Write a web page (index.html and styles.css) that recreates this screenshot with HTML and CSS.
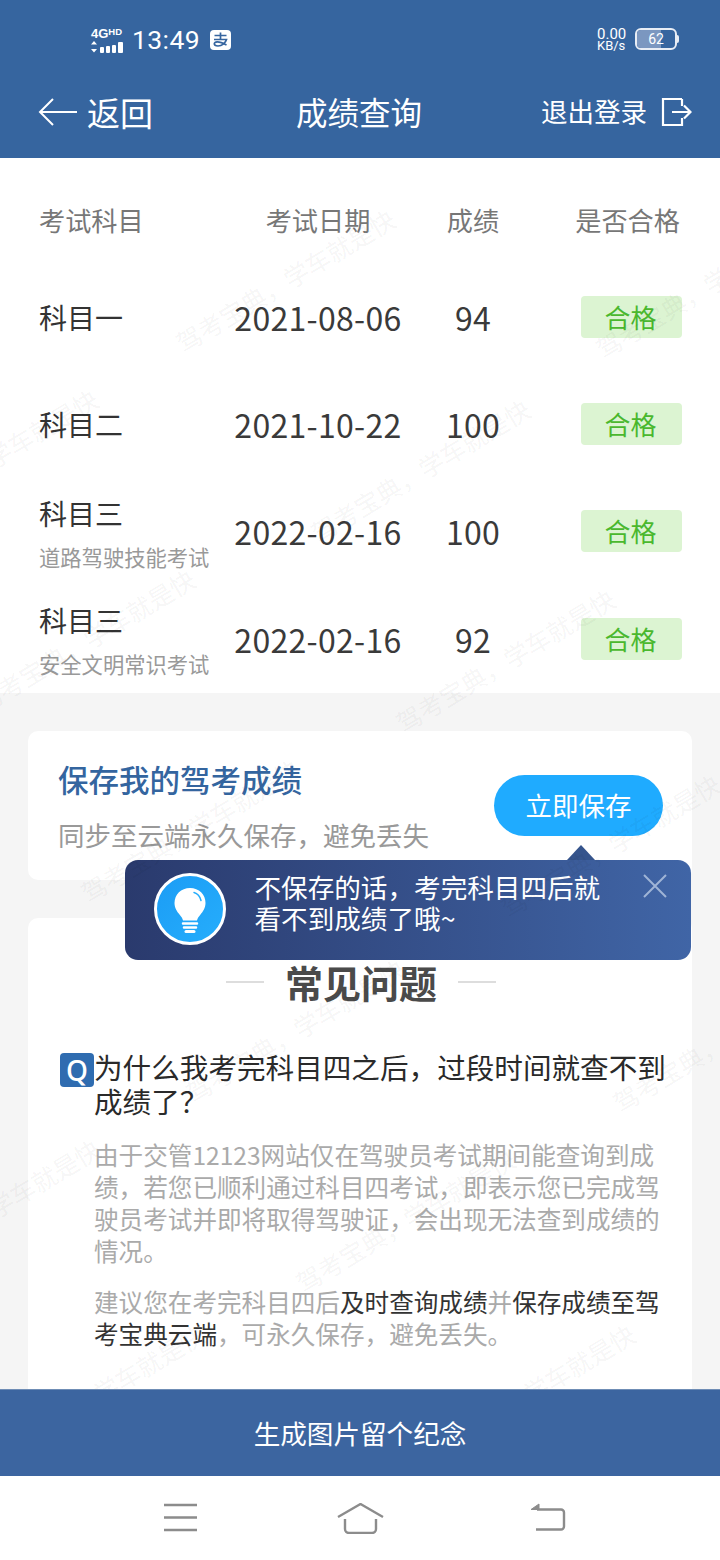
FILE: index.html
```html
<!DOCTYPE html>
<html lang="zh-CN">
<head>
<meta charset="utf-8">
<title>成绩查询</title>
<link rel="stylesheet" href="styles.css">
</head>
<body>
<div class="page">
  <header class="top">
    <div class="status">
      <div class="status-left">
        <div class="net">
          <span class="net-type">4G<sup>HD</sup></span>
          <svg class="signal" width="36" height="12" viewBox="0 0 36 12"><path d="M3 0l3 3.500H0zM3 11.500L0 8h6z" fill="#fff"/><rect x="9" y="6" width="4" height="6" rx="1" fill="#fff"/><rect x="15" y="5" width="4" height="7" rx="1" fill="#fff"/><rect x="21" y="4" width="4" height="8" rx="1" fill="#fff"/><rect x="27" y="1" width="5" height="11" rx="1" fill="#fff"/></svg>
        </div>
        <span class="clock">13:49</span>
        <svg class="alipay" width="21" height="20" viewBox="0 0 21 20"><rect width="21" height="20" rx="4" fill="#fff"/><path d="M4.500 5.500h12M10.500 2.500v7M4 9.500h12.500c-1 3.500-4.500 6.500-8.500 6.500-2.500 0-3.700-1-3.700-2.200 0-2.300 4-3 12.200 1.200" fill="none" stroke="#36659f" stroke-width="1.700"/></svg>
      </div>
      <div class="status-right">
        <div class="speed"><span class="speed-num">0.00</span><span class="speed-unit">KB/s</span></div>
        <div class="battery"><div class="battery-body"><div class="battery-fill"></div><span class="battery-num">62</span></div><div class="battery-cap"></div></div>
      </div>
    </div>
    <nav class="bar">
      <div class="back">
        <svg width="40" height="30" viewBox="0 0 40 30"><path d="M15 2L2 15l13 13M2 15h37" fill="none" stroke="#fff" stroke-width="2"/></svg>
        <span>返回</span>
      </div>
      <div class="title">成绩查询</div>
      <div class="logout">
        <span>退出登录</span>
        <svg width="31" height="30" viewBox="0 0 31 30"><path d="M21 2H2v26h19v-7M21 9V2M11 15h18M23 8.500l6.500 6.500-6.500 6.500" fill="none" stroke="#fff" stroke-width="2.200"/></svg>
      </div>
    </nav>
  </header>

  <main class="main">
    <section class="table">
      <div class="row row-head">
        <span>考试科目</span>
        <span class="c">考试日期</span>
        <span class="c">成绩</span>
        <span class="head-last">是否合格</span>
      </div>
      <div class="row">
        <div class="name">科目一</div>
        <div class="num c">2021-08-06</div>
        <div class="num c">94</div>
        <div class="pass">合格</div>
      </div>
      <div class="row">
        <div class="name">科目二</div>
        <div class="num c">2021-10-22</div>
        <div class="num c">100</div>
        <div class="pass">合格</div>
      </div>
      <div class="row">
        <div class="name name-two">科目三<small>道路驾驶技能考试</small></div>
        <div class="num c">2022-02-16</div>
        <div class="num c">100</div>
        <div class="pass">合格</div>
      </div>
      <div class="row">
        <div class="name name-two">科目三<small>安全文明常识考试</small></div>
        <div class="num c">2022-02-16</div>
        <div class="num c">92</div>
        <div class="pass">合格</div>
      </div>
    </section>

    <section class="card save">
      <div class="save-text">
        <h2>保存我的驾考成绩</h2>
        <p>同步至云端永久保存，避免丢失</p>
      </div>
      <button class="save-btn">立即保存</button>
    </section>

    <section class="card faq">
      <h3 class="faq-title"><i></i><span>常见问题</span><i></i></h3>
      <div class="q"><span class="q-mark">Q</span><span class="q-text">为什么我考完科目四之后，过段时间就查不到成绩了？</span></div>
      <p class="a">由于交管12123网站仅在驾驶员考试期间能查询到成绩，若您已顺利通过科目四考试，即表示您已完成驾驶员考试并即将取得驾驶证，会出现无法查到成绩的情况。</p>
      <p class="a a2">建议您在考完科目四后<b>及时查询成绩</b>并<b>保存成绩至驾考宝典云端</b>，可永久保存，避免丢失。</p>
    </section>

    <div class="tip">
      <div class="tip-arrow"></div>
      <svg class="tip-icon" width="72" height="72" viewBox="0 0 72 72">
        <defs><linearGradient id="bulbbg" x1="0" y1="0" x2="1" y2="1"><stop offset="0" stop-color="#1b9cf5"/><stop offset="1" stop-color="#26aefc"/></linearGradient></defs>
        <circle cx="36" cy="36" r="34.500" fill="url(#bulbbg)" stroke="#fff" stroke-width="3"/>
        <path d="M36 15c-9 0-15.500 6.500-15.500 15 0 5 2.500 8.500 5 11.500 2 2.300 3 4 3.500 6h14c.5-2 1.500-3.700 3.500-6 2.500-3 5-6.500 5-11.500C51.500 21.500 45 15 36 15z" fill="#fff"/>
        <path d="M40 19.500c3.500 1 6 4 7 8" fill="none" stroke="#26aefc" stroke-width="1.500" stroke-linecap="round"/>
        <path d="M29 50.500h14M30 54.500h12" stroke="#fff" stroke-width="2.500" stroke-linecap="round"/>
        <path d="M32 58.500h8" stroke="#fff" stroke-width="3" stroke-linecap="round"/>
      </svg>
      <p class="tip-text">不保存的话，考完科目四后就<br>看不到成绩了哦~</p>
      <svg class="tip-close" width="26" height="26" viewBox="0 0 26 26"><path d="M2 2l22 22M24 2L2 24" stroke="#9fb4d6" stroke-width="2"/></svg>
    </div>

    <div class="marks">
      <span class="wm w1">驾考宝典，学车就是快</span>
      <span class="wm w2">驾考宝典，学车就是快</span>
      <span class="wm w3">驾考宝典，学车就是快</span>
      <span class="wm w4">驾考宝典，学车就是快</span>
      <span class="wm w5">驾考宝典，学车就是快</span>
      <span class="wm w6">驾考宝典，学车就是快</span>
      <span class="wm w7">驾考宝典，学车就是快</span>
      <span class="wm w8">驾考宝典，学车就是快</span>
      <span class="wm w9">驾考宝典，学车就是快</span>
      <span class="wm w10">驾考宝典，学车就是快</span>
      <span class="wm w11">驾考宝典，学车就是快</span>
      <span class="wm w12">驾考宝典，学车就是快</span>
      <span class="wm w13">驾考宝典，学车就是快</span>
      <span class="wm w14">驾考宝典，学车就是快</span>
    </div>
  </main>

  <div class="gen">生成图片留个纪念</div>

  <footer class="sys">
    <svg width="36" height="30" viewBox="0 0 36 30"><path d="M1 2h33M1 14.500h33M1 27h33" stroke="#8c8c8c" stroke-width="2.400"/></svg>
    <svg class="sys-home" width="47" height="31" viewBox="0 0 47 31"><path d="M1 14L23.500 1 46 14" fill="none" stroke="#8c8c8c" stroke-width="2.400"/><path d="M8 16v10a4 4 0 0 0 4 4h23a4 4 0 0 0 4-4V16" fill="none" stroke="#8c8c8c" stroke-width="2.400"/></svg>
    <svg width="36" height="30" viewBox="0 0 36 30"><path d="M1 6.500L9 1v5.500z" fill="#8c8c8c" stroke="#8c8c8c"/><path d="M7 6.500h24a3 3 0 0 1 3 3v14a3 3 0 0 1-3 3H6" fill="none" stroke="#8c8c8c" stroke-width="2.400"/></svg>
  </footer>
</div>
</body>
</html>
```

FILE: styles.css
```css
* { box-sizing: border-box; margin: 0; padding: 0; }
html, body { width: 720px; height: 1560px; overflow: hidden; background: #fff; }
body { font-family: "Noto Sans CJK SC", "Noto Sans", sans-serif; color: #333; }
.page { width: 720px; height: 1560px; display: flex; flex-direction: column; }

.top { height: 158px; background: #36659f; color: #fff; flex: none; }
.status { height: 76px; display: flex; justify-content: space-between; padding: 26px 41px 0 91px; }
.status-left { display: flex; align-items: flex-start; }
.net { width: 36px; display: flex; flex-direction: column; font-family: "Liberation Sans", sans-serif; font-weight: 700; margin-top: 1px; }
.net-type { font-size: 13px; line-height: 14px; white-space: nowrap; }
.net-type sup { font-size: 9.500px; line-height: 8px; vertical-align: 3px; }
.clock { font-family: "Roboto", sans-serif; font-size: 26.500px; line-height: 28px; margin-left: 5px; letter-spacing: .4px; }
.alipay { margin: 4px 0 0 10px; }
.status-right { display: flex; align-items: flex-start; }
.speed { width: 38px; display: flex; flex-direction: column; font-family: "Roboto", sans-serif; line-height: 12px; margin-top: 2px; }
.speed-num { font-size: 15px; }
.speed-unit { font-size: 13px; }
.battery { display: flex; align-items: center; height: 22px; margin-top: 2px; }
.battery-body { position: relative; width: 42px; height: 22px; border: 2px solid #e8edf5; border-radius: 6px; overflow: hidden; display: flex; align-items: center; justify-content: center; }
.battery-fill { position: absolute; left: 0; top: 0; bottom: 0; width: 24px; background: #7b97c0; }
.battery-num { position: relative; font-family: "Roboto", sans-serif; font-size: 14px; line-height: 18px; }
.battery-cap { width: 2px; height: 8px; background: #e8edf5; border-radius: 0 2px 2px 0; }

.bar { height: 82px; display: grid; grid-template-columns: 258px auto 1fr; align-items: center; padding: 0 28px 10px 38px; }
.back { display: flex; align-items: center; font-size: 33px; line-height: 44px; gap: 9px; }
.title { font-size: 31.500px; line-height: 44px; margin-bottom: 2px; }
.logout { display: flex; align-items: center; justify-content: flex-end; gap: 14px; font-size: 26.500px; line-height: 36px; }
.logout span { margin-bottom: 2px; }

.main { position: relative; flex: 1; min-height: 0; overflow: hidden; background: #f5f5f5; }

.table { background: #fff; padding: 0 38px 0 39px; }
.row { height: 107.330px; display: grid; grid-template-columns: 195px 168px 142px 138px; align-items: center; }
.row.row-head { height: 106px; padding-top: 18px; font-size: 26.200px; color: #777; }
.c { text-align: center; white-space: nowrap; }
.head-last { justify-self: end; margin-right: 2px; white-space: nowrap; }
.name { font-size: 28px; line-height: 43px; color: #333; }
.name-two { padding-top: 5px; }
.name small { display: block; font-size: 21.300px; line-height: 43px; color: #999; }
.num { font-size: 32px; line-height: 44px; color: #3a3a3a; letter-spacing: .3px; margin-bottom: 2px; }
.pass { justify-self: end; width: 101px; height: 42px; margin-bottom: 2px; padding-right: 2px; background: #dcf4d2; border-radius: 4px; color: #4ab82e; font-size: 26px; line-height: 42px; text-align: center; }

.card { background: #fff; border-radius: 10px; margin: 38px 28px 0; }
.save { height: 149px; display: flex; justify-content: space-between; padding: 0 29px 0 30px; position: relative; }
.save-text { padding-top: 26px; }
.save-text h2 { font-size: 30.500px; line-height: 44px; font-weight: 500; color: #34659f; white-space: nowrap; }
.save-text p { font-size: 26.500px; line-height: 40px; color: #999; margin-top: 14px; white-space: nowrap; }
.save-btn { width: 169px; height: 61px; margin-top: 44px; padding-bottom: 2px; border: 0; border-radius: 31px; background: #1fabff; color: #fff; font: inherit; font-size: 26.500px; }

.faq { padding: 39px 26px 60px 32px; min-height: 600px; }
.faq-title { display: flex; align-items: center; justify-content: center; gap: 21px; font-size: 38px; line-height: 50px; font-weight: 700; color: #4a4a4a; margin-left: -4px; }
.faq-title i { width: 38px; height: 2px; background: #ddd; margin-top: -1px; }
.q { display: flex; align-items: flex-start; margin-top: 43px; }
.q-mark { flex: none; width: 34px; height: 34px; margin-top: 3px; background: #2f6cb0; border-radius: 4px; color: #fff; font-family: "Noto Sans", sans-serif; font-size: 28px; font-weight: 500; line-height: 34px; text-align: center; }
.q-text { font-size: 28.600px; line-height: 34px; color: #2a2a2a; }
.a { font-size: 24.600px; line-height: 32px; color: #aaa; margin: 20px 0 0 34px; }
.a2 { margin-top: 19px; }
.a b { font-weight: 400; color: #333; }

.tip { position: absolute; left: 125px; top: 702px; width: 566px; height: 100px; border-radius: 13px; background: linear-gradient(90deg, #2a3a6d, #4065a6); color: #fff; }
.tip-arrow { position: absolute; left: 442px; top: -15px; width: 0; height: 0; border-left: 14px solid transparent; border-right: 14px solid transparent; border-bottom: 15px solid #35548c; }
.tip-icon { position: absolute; left: 29px; top: 13px; }
.tip-text { position: absolute; left: 129.500px; top: 11px; font-size: 26.600px; line-height: 31px; white-space: nowrap; }
.tip-close { position: absolute; left: 517px; top: 13px; }

.marks { position: absolute; inset: 0; pointer-events: none; overflow: hidden; }
.wm { position: absolute; width: 260px; margin: -18px 0 0 -130px; font-size: 25px; line-height: 36px; text-align: center; white-space: nowrap; color: rgba(0, 0, 0, .055); transform: rotate(-31deg); }
.w1 { left: 285px; top: 122px; }
.w2 { left: 705px; top: 128px; }
.w3 { left: -12px; top: 302px; }
.w4 { left: 420px; top: 312px; }
.w5 { left: 85px; top: 482px; }
.w6 { left: 505px; top: 502px; }
.w7 { left: 190px; top: 672px; }
.w8 { left: 610px; top: 687px; }
.w9 { left: 295px; top: 872px; }
.w10 { left: 722px; top: 882px; }
.w11 { left: -10px; top: 1052px; }
.w12 { left: 405px; top: 1062px; }
.w13 { left: 95px; top: 1237px; }
.w14 { left: 525px; top: 1237px; }

.gen { flex: none; height: 87px; background: #3c65a0; border-top: 1px solid #6f8db5; color: #fff; font-size: 26.600px; line-height: 86px; text-align: center; }
.sys { flex: none; height: 84px; background: #fff; display: flex; justify-content: space-between; align-items: center; padding: 0 154px 0 163px; }
.sys-home { margin-right: 8px; }
```
